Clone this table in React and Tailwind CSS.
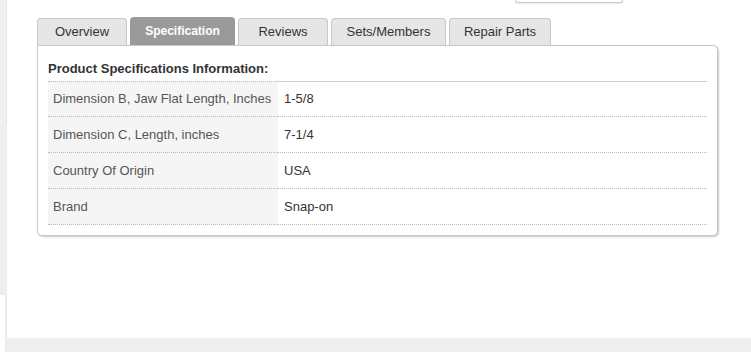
import React from "react";

const tabs = [
  { label: "Overview", w: "w-[90px]" },
  { label: "Specification", w: "w-[105px]", active: true },
  { label: "Reviews", w: "w-[90px]" },
  { label: "Sets/Members", w: "w-[115px]" },
  { label: "Repair Parts", w: "w-[102px]" },
];

const specs = [
  ["Dimension B, Jaw Flat Length, Inches", "1-5/8"],
  ["Dimension C, Length, inches", "7-1/4"],
  ["Country Of Origin", "USA"],
  ["Brand", "Snap-on"],
];

function Tab({ label, w, active }) {
  if (active) {
    return (
      <div
        className={`${w} h-[28px] pb-[2px] flex items-center justify-center rounded-t-[4px] border border-b-0 border-[#999] bg-[#9a9a9a] text-white font-bold text-[12px]`}
      >
        {label}
      </div>
    );
  }
  return (
    <div
      className={`${w} h-[27px] flex items-center justify-center rounded-t-[4px] border border-b-0 border-[#c8c8c8] bg-[#e6e6e6] text-[#333] text-[13px]`}
    >
      {label}
    </div>
  );
}

function SpecRow({ label, value, first }) {
  return (
    <>
      <div
        className={`h-[36px] pl-[5px] flex items-center bg-[#f5f5f5] text-[#555] border-b border-dotted border-[#bbb] ${
          first ? "border-t" : ""
        }`}
      >
        {label}
      </div>
      <div
        className={`h-[36px] pl-[6px] flex items-center text-[#333] border-b border-dotted border-[#bbb] ${
          first ? "border-t" : ""
        }`}
        style={first ? { borderTopStyle: "solid", borderTopColor: "#cccccc" } : undefined}
      >
        {value}
      </div>
    </>
  );
}

export default function App() {
  return (
    <div className="w-[751px] h-[352px] flex bg-white overflow-hidden font-['Liberation_Sans',Arial,sans-serif]">
      {/* left gutter */}
      <div className="w-[7px] flex flex-col shrink-0">
        <div className="h-[125px] bg-[#f0f0f0] border-r border-[#e4e4e4]" />
        <div className="h-[170px] bg-[#eeeeee]" />
        <div className="flex-1 flex justify-end">
          <div className="w-[2px] bg-[#ececec]" />
        </div>
      </div>

      <div className="flex-1 flex flex-col">
        <div className="flex-1 flex flex-col pl-[30px] pr-[33px]">
          {/* edge of the control above */}
          <div className="ml-[478px] w-[108px] h-[3px] border border-t-0 border-[#c8c8c8] rounded-b-[4px] shadow-[0_1px_1px_rgba(0,0,0,0.08)]" />

          {/* tabs */}
          <div className="mt-[14px] flex items-end gap-[3px]">
            {tabs.map((t) => (
              <Tab key={t.label} {...t} />
            ))}
          </div>

          {/* panel */}
          <div className="border border-[#c8c8c8] rounded-b-[5px] rounded-tr-[5px] bg-white shadow-[1px_1px_2px_rgba(0,0,0,0.22)] px-[10px] pt-[14px] pb-[10px]">
            <div className="h-[21px] leading-[18px] text-[13px] font-bold text-[#333]">
              Product Specifications Information:
            </div>
            <div className="grid grid-cols-[230px_1fr] text-[13px]">
              {specs.map(([l, v], i) => (
                <SpecRow key={l} label={l} value={v} first={i === 0} />
              ))}
            </div>
          </div>
        </div>
        <div className="h-[14px] bg-[#efefef]" />
      </div>
    </div>
  );
}
